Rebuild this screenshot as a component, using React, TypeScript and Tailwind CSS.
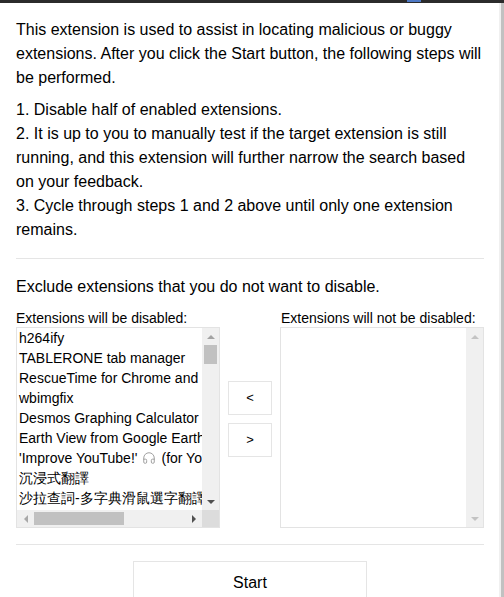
import { Headphones } from "lucide-react";

const disabledList = [
  "h264ify",
  "TABLERONE tab manager",
  "RescueTime for Chrome and Chrome OS",
  "wbimgfix",
  "Desmos Graphing Calculator",
  "Earth View from Google Earth",
  "IMPROVE",
  "沉浸式翻譯",
  "沙拉查詞-多字典滑鼠選字翻譯",
];

function Arrow({ dir, color }: { dir: "up" | "down" | "left" | "right"; color: string }) {
  // little scrollbar triangles
  if (dir === "up")
    return <div className="h-0 w-0 border-x-[4px] border-b-[4px] border-x-transparent" style={{ borderBottomColor: color }} />;
  if (dir === "down")
    return <div className="h-0 w-0 border-x-[4px] border-t-[4px] border-x-transparent" style={{ borderTopColor: color }} />;
  if (dir === "left")
    return <div className="h-0 w-0 border-y-[4px] border-r-[4px] border-y-transparent" style={{ borderRightColor: color }} />;
  return <div className="h-0 w-0 border-y-[4px] border-l-[4px] border-y-transparent" style={{ borderLeftColor: color }} />;
}

function Item({ text }: { text: string }) {
  if (text === "IMPROVE") {
    return (
      <div className="flex h-5 items-center whitespace-nowrap leading-5">
        <span className="shrink-0">'Improve YouTube!'</span>
        <Headphones className="mx-[5px] h-[14px] w-[14px] shrink-0 text-[#9a9a9a]" strokeWidth={1.6} />
        <span className="shrink-0">(for YouTube)</span>
      </div>
    );
  }
  return <div className="h-5 whitespace-nowrap leading-5">{text}</div>;
}

function DisabledBox() {
  return (
    <div className="flex h-[201px] w-[204px] border border-[#e3e3e3] bg-white">
      <div className="flex min-w-0 flex-1 flex-col">
        <div className="flex-1 overflow-hidden pl-[2px] text-[14px]">
          {disabledList.map((t) => (
            <Item key={t} text={t} />
          ))}
        </div>
        <div className="flex h-[17px] items-center bg-[#f0f0f0]">
          <div className="flex w-[17px] justify-center">
            <Arrow dir="left" color="#a8a8a8" />
          </div>
          <div className="h-[13px] w-[90px] bg-[#c1c1c1]" />
          <div className="flex-1" />
          <div className="flex w-[17px] justify-center">
            <Arrow dir="right" color="#505050" />
          </div>
        </div>
      </div>
      <div className="flex w-[17px] flex-col bg-[#f0f0f0]">
        <div className="flex h-[17px] items-center justify-center">
          <Arrow dir="up" color="#a3a3a3" />
        </div>
        <div className="mx-auto h-[19px] w-[13px] bg-[#c1c1c1]" />
        <div className="flex-1" />
        <div className="flex h-[17px] items-center justify-center">
          <Arrow dir="down" color="#505050" />
        </div>
        <div className="h-[17px] bg-[#dcdcdc]" />
      </div>
    </div>
  );
}

function EmptyBox() {
  return (
    <div className="flex h-[201px] w-[204px] border border-[#e3e3e3] bg-white">
      <div className="flex-1" />
      <div className="flex w-[17px] flex-col bg-[#f0f0f0]">
        <div className="flex h-[17px] items-center justify-center">
          <Arrow dir="up" color="#c3c3c3" />
        </div>
        <div className="flex-1" />
        <div className="flex h-[17px] items-center justify-center">
          <Arrow dir="down" color="#c3c3c3" />
        </div>
      </div>
    </div>
  );
}

export default function App() {
  return (
    <div className="flex h-[597px] flex-col overflow-hidden bg-white font-['Segoe_UI','Liberation_Sans',sans-serif] text-black">
      {/* window chrome strip */}
      <div className="flex h-[3px] bg-[#2b2b2b]">
        <div className="ml-[407px] h-[2px] w-[14px] bg-[#4d78c4]" />
      </div>
      <div className="flex min-h-0 flex-1">
        <div className="min-w-0 flex-1 pl-4 pr-[15px] pt-[15px]">
          <p className="text-[16px] leading-6">
            This extension is used to assist in locating malicious or buggy extensions. After you click the Start
            button, the following steps will be performed.
          </p>
          <div className="mt-2 text-[16px] leading-6">
            <div>1. Disable half of enabled extensions.</div>
            <div>
              2. It is up to you to manually test if the target extension is still running, and this extension will
              further narrow the search based on your feedback.
            </div>
            <div>3. Cycle through steps 1 and 2 above until only one extension remains.</div>
          </div>
          <hr className="mt-4 border-[#e5e5e5]" />
          <div className="mt-4 text-[16px] leading-6">Exclude extensions that you do not want to disable.</div>
          <div className="flex items-center">
            <div className="mt-[10px]">
              <div className="text-[14px] leading-[18px]">Extensions will be disabled:</div>
              <DisabledBox />
            </div>
            <div className="mt-[10px] flex w-[60px] flex-col items-center gap-2">
              <button className="h-[34px] w-[44px] border border-[#e5e5e5] bg-white text-[13px]">&lt;</button>
              <button className="h-[34px] w-[44px] border border-[#e5e5e5] bg-white text-[13px]">&gt;</button>
            </div>
            <div className="mt-[10px]">
              <div className="pl-px text-[14px] leading-[18px]">Extensions will not be disabled:</div>
              <EmptyBox />
            </div>
          </div>
          <hr className="mt-4 border-[#e5e5e5]" />
          <div className="mt-4 flex justify-center">
            <button className="h-11 w-[234px] shrink-0 border border-[#e5e5e5] bg-white text-[16px]">Start</button>
          </div>
        </div>
        {/* page scrollbar */}
        <div className="flex w-[5px] bg-[#f0f0f0]">
          <div className="ml-[2px] w-[3px] bg-[#c1c1c1]" />
        </div>
      </div>
    </div>
  );
}
